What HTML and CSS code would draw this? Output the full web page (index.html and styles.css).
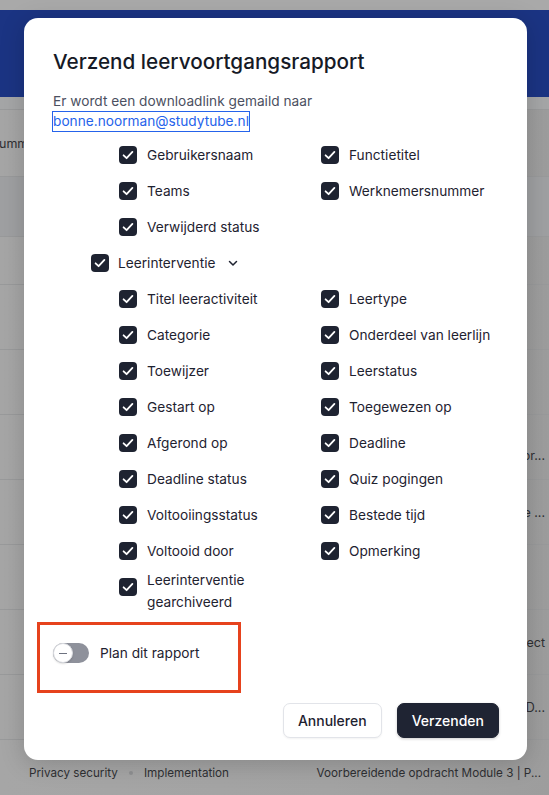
FILE: index.html
```html
<!DOCTYPE html>
<html lang="nl">
<head>
<meta charset="utf-8">
<title>Verzend leervoortgangsrapport</title>
<link rel="stylesheet" href="styles.css">
</head>
<body>
<div class="page">
  <div class="topstrip"></div>
  <header class="appbar"></header>
  <div class="table">
    <div class="row row-head"></div>
    <div class="row row-a"><span class="lead">Summary</span></div>
    <div class="row row-band"></div>
    <div class="row row-b"></div>
    <div class="row"></div>
    <div class="row"></div>
    <div class="row"><span class="tail low">Lorem ipsum dolor...</span></div>
    <div class="row"><span class="tail">Module 2 | Praktijke ...</span></div>
    <div class="row"></div>
    <div class="row"><span class="tail">Eindproject</span></div>
    <div class="row"><span class="tail">Module 3 | PD...</span></div>
  </div>
  <footer class="foot">
    <span>Privacy security</span>
    <span class="dot"></span>
    <span>Implementation</span>
    <span class="foot-right">Voorbereidende opdracht Module 3 | P...</span>
  </footer>
</div>

<div class="modal">
  <h2 class="title">Verzend leervoortgangsrapport</h2>
  <p class="desc">Er wordt een downloadlink gemaild naar <a class="email" href="#">bonne.noorman@studytube.nl</a></p>

  <div class="fields">
    <div class="grid">
      <label class="item"><span class="cb"><svg viewBox="0 0 18 18"><path d="M4.6 9.3 L7.6 12.2 L13.4 5.9"/></svg></span><span class="lbl">Gebruikersnaam</span></label>
      <label class="item"><span class="cb"><svg viewBox="0 0 18 18"><path d="M4.6 9.3 L7.6 12.2 L13.4 5.9"/></svg></span><span class="lbl">Functietitel</span></label>
      <label class="item"><span class="cb"><svg viewBox="0 0 18 18"><path d="M4.6 9.3 L7.6 12.2 L13.4 5.9"/></svg></span><span class="lbl">Teams</span></label>
      <label class="item"><span class="cb"><svg viewBox="0 0 18 18"><path d="M4.6 9.3 L7.6 12.2 L13.4 5.9"/></svg></span><span class="lbl">Werknemersnummer</span></label>
      <label class="item"><span class="cb"><svg viewBox="0 0 18 18"><path d="M4.6 9.3 L7.6 12.2 L13.4 5.9"/></svg></span><span class="lbl">Verwijderd status</span></label>
    </div>

    <div class="parent">
      <span class="cb"><svg viewBox="0 0 18 18"><path d="M4.6 9.3 L7.6 12.2 L13.4 5.9"/></svg></span>
      <span class="lbl">Leerinterventie</span>
      <svg class="chev" viewBox="0 0 12 12"><path d="M2.5 4.5 L6 8 L9.5 4.5"/></svg>
    </div>

    <div class="grid">
      <label class="item"><span class="cb"><svg viewBox="0 0 18 18"><path d="M4.6 9.3 L7.6 12.2 L13.4 5.9"/></svg></span><span class="lbl">Titel leeractiviteit</span></label>
      <label class="item"><span class="cb"><svg viewBox="0 0 18 18"><path d="M4.6 9.3 L7.6 12.2 L13.4 5.9"/></svg></span><span class="lbl">Leertype</span></label>
      <label class="item"><span class="cb"><svg viewBox="0 0 18 18"><path d="M4.6 9.3 L7.6 12.2 L13.4 5.9"/></svg></span><span class="lbl">Categorie</span></label>
      <label class="item"><span class="cb"><svg viewBox="0 0 18 18"><path d="M4.6 9.3 L7.6 12.2 L13.4 5.9"/></svg></span><span class="lbl">Onderdeel van leerlijn</span></label>
      <label class="item"><span class="cb"><svg viewBox="0 0 18 18"><path d="M4.6 9.3 L7.6 12.2 L13.4 5.9"/></svg></span><span class="lbl">Toewijzer</span></label>
      <label class="item"><span class="cb"><svg viewBox="0 0 18 18"><path d="M4.6 9.3 L7.6 12.2 L13.4 5.9"/></svg></span><span class="lbl">Leerstatus</span></label>
      <label class="item"><span class="cb"><svg viewBox="0 0 18 18"><path d="M4.6 9.3 L7.6 12.2 L13.4 5.9"/></svg></span><span class="lbl">Gestart op</span></label>
      <label class="item"><span class="cb"><svg viewBox="0 0 18 18"><path d="M4.6 9.3 L7.6 12.2 L13.4 5.9"/></svg></span><span class="lbl">Toegewezen op</span></label>
      <label class="item"><span class="cb"><svg viewBox="0 0 18 18"><path d="M4.6 9.3 L7.6 12.2 L13.4 5.9"/></svg></span><span class="lbl">Afgerond op</span></label>
      <label class="item"><span class="cb"><svg viewBox="0 0 18 18"><path d="M4.6 9.3 L7.6 12.2 L13.4 5.9"/></svg></span><span class="lbl">Deadline</span></label>
      <label class="item"><span class="cb"><svg viewBox="0 0 18 18"><path d="M4.6 9.3 L7.6 12.2 L13.4 5.9"/></svg></span><span class="lbl">Deadline status</span></label>
      <label class="item"><span class="cb"><svg viewBox="0 0 18 18"><path d="M4.6 9.3 L7.6 12.2 L13.4 5.9"/></svg></span><span class="lbl">Quiz pogingen</span></label>
      <label class="item"><span class="cb"><svg viewBox="0 0 18 18"><path d="M4.6 9.3 L7.6 12.2 L13.4 5.9"/></svg></span><span class="lbl">Voltooiingsstatus</span></label>
      <label class="item"><span class="cb"><svg viewBox="0 0 18 18"><path d="M4.6 9.3 L7.6 12.2 L13.4 5.9"/></svg></span><span class="lbl">Bestede tijd</span></label>
      <label class="item"><span class="cb"><svg viewBox="0 0 18 18"><path d="M4.6 9.3 L7.6 12.2 L13.4 5.9"/></svg></span><span class="lbl">Voltooid door</span></label>
      <label class="item"><span class="cb"><svg viewBox="0 0 18 18"><path d="M4.6 9.3 L7.6 12.2 L13.4 5.9"/></svg></span><span class="lbl">Opmerking</span></label>
      <label class="item multi"><span class="cb"><svg viewBox="0 0 18 18"><path d="M4.6 9.3 L7.6 12.2 L13.4 5.9"/></svg></span><span class="lbl">Leerinterventie gearchiveerd</span></label>
    </div>
  </div>

  <div class="toggle-row">
    <span class="toggle"><span class="knob"></span></span>
    <span class="toggle-lbl">Plan dit rapport</span>
  </div>

  <div class="actions">
    <button class="btn btn-secondary" type="button">Annuleren</button>
    <button class="btn btn-primary" type="button">Verzenden</button>
  </div>

  <div class="annot"></div>
</div>
</body>
</html>
```
FILE: styles.css
```css
* { box-sizing: border-box; }

html, body {
  margin: 0;
  padding: 0;
}

body {
  width: 549px;
  height: 795px;
  overflow: hidden;
  font-family: Inter, "Liberation Sans", sans-serif;
  background: #a3a3a3;
  position: relative;
}

/* ---------- dimmed background page ---------- */
.page {
  display: flex;
  flex-direction: column;
  height: 795px;
  background: linear-gradient(90deg, #a6a6a6 0%, #a3a3a3 60%, #9d9d9d 100%);
}

.topstrip {
  height: 10px;
  background: #a9a9a9;
}

.appbar {
  height: 87px;
  background: #1b3483;
}

.table {
  display: flex;
  flex-direction: column;
}

.row {
  height: 65px;
  border-bottom: 1px solid #999a9b;
  display: flex;
  align-items: center;
  justify-content: space-between;
  font-size: 12.5px;
  color: #2f3033;
  white-space: nowrap;
  overflow: hidden;
}

.row-head {
  height: 13px;
  background: #a5a6a7;
}

.row-a {
  height: 67px;
}

.row-band {
  height: 60px;
  background: #9fa0a2;
}

.row-b {
  height: 48px;
}

.lead {
  margin-left: -9px;
}

.tail {
  margin-left: auto;
  margin-right: 4px;
}

.tail.low {
  margin-top: 16px;
}

.foot {
  flex: 1;
  display: flex;
  align-items: center;
  gap: 11px;
  padding: 10px 8px 0 29px;
  font-size: 11.7px;
  color: #2f3033;
  white-space: nowrap;
}

.dot {
  width: 4px;
  height: 4px;
  border-radius: 50%;
  background: #8f9092;
}

.foot-right {
  margin-left: auto;
}

/* ---------- modal ---------- */
.modal {
  position: absolute;
  left: 24px;
  top: 18px;
  width: 503px;
  background: #fff;
  border-radius: 14px;
  padding: 30px 28px 22px 29px;
  box-shadow: 0 4px 24px rgba(0, 0, 0, 0.18);
  color: #1e2230;
}

.title {
  margin: 0;
  font-size: 20.7px;
  line-height: 28px;
  font-weight: 500;
  color: #161a26;
}

.desc {
  margin: 15px 0 0;
  font-size: 13.7px;
  line-height: 20px;
  color: #4b5061;
}

.email {
  display: inline-block;
  color: #2563eb;
  text-decoration: none;
  outline: 1px solid #2563eb;
  outline-offset: 0;
  line-height: 19px;
}

.fields {
  margin-top: 6px;
}

.grid {
  display: grid;
  grid-template-columns: 202px 1fr;
  padding-left: 66px;
}

.item {
  min-height: 36px;
  display: flex;
  align-items: center;
  gap: 10px;
  font-size: 13.7px;
  color: #1e2230;
}

.item .lbl {
  line-height: 22px;
}

.item.multi {
  align-items: flex-start;
  padding-right: 30px;
}

.item.multi .cb {
  margin-top: 9px;
}

.cb {
  flex: none;
  width: 18px;
  height: 18px;
  border-radius: 4px;
  background: #1e2331;
  display: flex;
  align-items: center;
  justify-content: center;
}

.cb svg {
  width: 18px;
  height: 18px;
}

.cb path {
  fill: none;
  stroke: #fff;
  stroke-width: 1.8;
  stroke-linecap: round;
  stroke-linejoin: round;
}

.parent {
  height: 36px;
  display: flex;
  align-items: center;
  gap: 9px;
  padding-left: 38px;
  font-size: 13.7px;
}

.chev {
  width: 12px;
  height: 12px;
  margin-left: 3px;
}

.chev path {
  fill: none;
  stroke: #1e2230;
  stroke-width: 1.5;
  stroke-linecap: round;
  stroke-linejoin: round;
}

/* ---------- toggle ---------- */
.toggle-row {
  margin-top: 30px;
  height: 20px;
  display: flex;
  align-items: center;
  gap: 11px;
}

.toggle {
  position: relative;
  width: 36px;
  height: 20px;
  border-radius: 10px;
  background: #8e919b;
}

.knob {
  position: absolute;
  left: 0;
  top: 0;
  width: 20px;
  height: 20px;
  border-radius: 50%;
  background: #fff;
  border: 1px solid #d9dbe0;
  box-shadow: 0 1px 2px rgba(0, 0, 0, 0.15);
}

.knob::after {
  content: "";
  position: absolute;
  left: 5px;
  top: 8.5px;
  width: 8px;
  height: 1.5px;
  background: #6d7280;
}

.toggle-lbl {
  font-size: 13.7px;
  color: #1e2230;
}

/* ---------- actions ---------- */
.actions {
  margin-top: 40px;
  display: flex;
  justify-content: flex-end;
  gap: 15px;
}

.btn {
  height: 35px;
  padding: 0 14px;
  border-radius: 7px;
  font-family: inherit;
  font-size: 14px;
  font-weight: 500;
  cursor: pointer;
}

.btn-secondary {
  background: #fff;
  color: #1e2230;
  border: 1px solid #e2e4e9;
  box-shadow: 0 1px 2px rgba(0, 0, 0, 0.05);
}

.btn-primary {
  background: #1f2433;
  color: #fff;
  border: 1px solid #1f2433;
  box-shadow: 0 1px 3px rgba(0, 0, 0, 0.2);
}

/* ---------- annotation box (screenshot markup) ---------- */
.annot {
  position: absolute;
  left: 13px;
  top: 604px;
  width: 204px;
  height: 71px;
  border: 3px solid #e6421d;
  pointer-events: none;
}
```
